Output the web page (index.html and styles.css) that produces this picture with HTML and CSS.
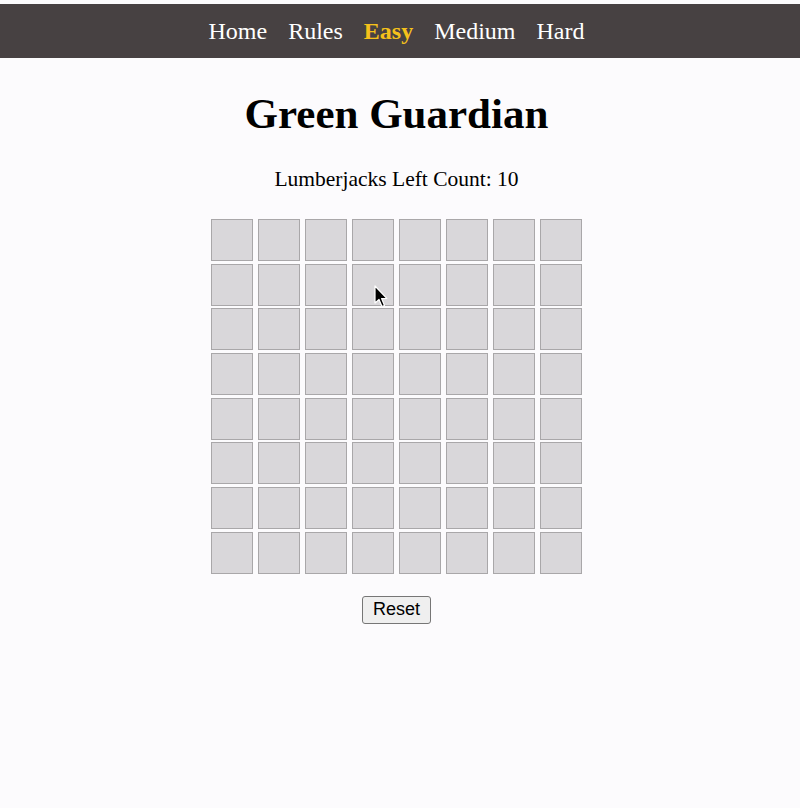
FILE: index.html
```html
<!DOCTYPE html>
<html>
<head>
<meta charset="utf-8">
<title>Green Guardian</title>
<link rel="stylesheet" href="styles.css">
</head>
<body>
<nav class="nav">
  <a class="nav-link">Home</a>
  <a class="nav-link">Rules</a>
  <a class="nav-link active">Easy</a>
  <a class="nav-link">Medium</a>
  <a class="nav-link">Hard</a>
</nav>
<main class="main">
  <h1 class="title">Green Guardian</h1>
  <p class="count">Lumberjacks Left Count: 10</p>
  <div class="board-wrap">
    <div class="board">
      <div class="cell"></div><div class="cell"></div><div class="cell"></div><div class="cell"></div><div class="cell"></div><div class="cell"></div><div class="cell"></div><div class="cell"></div>
      <div class="cell"></div><div class="cell"></div><div class="cell"></div><div class="cell"></div><div class="cell"></div><div class="cell"></div><div class="cell"></div><div class="cell"></div>
      <div class="cell"></div><div class="cell"></div><div class="cell"></div><div class="cell"></div><div class="cell"></div><div class="cell"></div><div class="cell"></div><div class="cell"></div>
      <div class="cell"></div><div class="cell"></div><div class="cell"></div><div class="cell"></div><div class="cell"></div><div class="cell"></div><div class="cell"></div><div class="cell"></div>
      <div class="cell"></div><div class="cell"></div><div class="cell"></div><div class="cell"></div><div class="cell"></div><div class="cell"></div><div class="cell"></div><div class="cell"></div>
      <div class="cell"></div><div class="cell"></div><div class="cell"></div><div class="cell"></div><div class="cell"></div><div class="cell"></div><div class="cell"></div><div class="cell"></div>
      <div class="cell"></div><div class="cell"></div><div class="cell"></div><div class="cell"></div><div class="cell"></div><div class="cell"></div><div class="cell"></div><div class="cell"></div>
      <div class="cell"></div><div class="cell"></div><div class="cell"></div><div class="cell"></div><div class="cell"></div><div class="cell"></div><div class="cell"></div><div class="cell"></div>
    </div>
    <svg class="cursor" width="16" height="24" viewBox="0 0 16 24"><path d="M1 1 L1 18 L5 14.5 L8 21.5 L10.5 20.5 L7.6 13.6 L12.8 13.4 Z" fill="#000" stroke="#fff" stroke-width="1.2" stroke-linejoin="round"/></svg>
  </div>
  <button class="reset">Reset</button>
</main>
</body>
</html>
```
FILE: styles.css
```css
html, body {
  margin: 0;
  padding: 0;
  background: #fcfbfd;
}
body {
  padding-top: 4px;
  font-family: "Liberation Serif", "Times New Roman", serif;
  color: #000;
}
.nav {
  height: 54px;
  background: #474142;
  display: flex;
  justify-content: center;
  align-items: center;
  gap: 21px;
  padding-right: 7px;
}
.nav-link {
  color: #fff;
  font-size: 24px;
  line-height: 28px;
}
.nav-link.active {
  color: #f5c11b;
  font-weight: bold;
}
.main {
  display: flex;
  flex-direction: column;
  align-items: center;
  padding-right: 7px;
}
.title {
  font-size: 43px;
  font-weight: bold;
  line-height: 49px;
  margin: 31px 0 0;
}
.count {
  font-size: 21.5px;
  line-height: 25px;
  margin: 29px 0 0;
}
.board-wrap {
  position: relative;
  margin-top: 27px;
}
.board {
  display: grid;
  grid-template-columns: repeat(8, 42px);
  grid-auto-rows: 42px;
  column-gap: 5.14px;
  row-gap: 2.7px;
}
.cell {
  box-sizing: border-box;
  background: #d9d7da;
  border: 1px solid #a9a7a9;
}
.cursor {
  position: absolute;
  left: 163px;
  top: 66px;
}
.reset {
  margin-top: 22px;
  width: 69px;
  height: 28px;
  font-family: "Liberation Sans", Arial, sans-serif;
  font-size: 18px;
  color: #000;
  background: #efefef;
  border: 1px solid #767676;
  border-radius: 3px;
  padding: 0;
}
```
